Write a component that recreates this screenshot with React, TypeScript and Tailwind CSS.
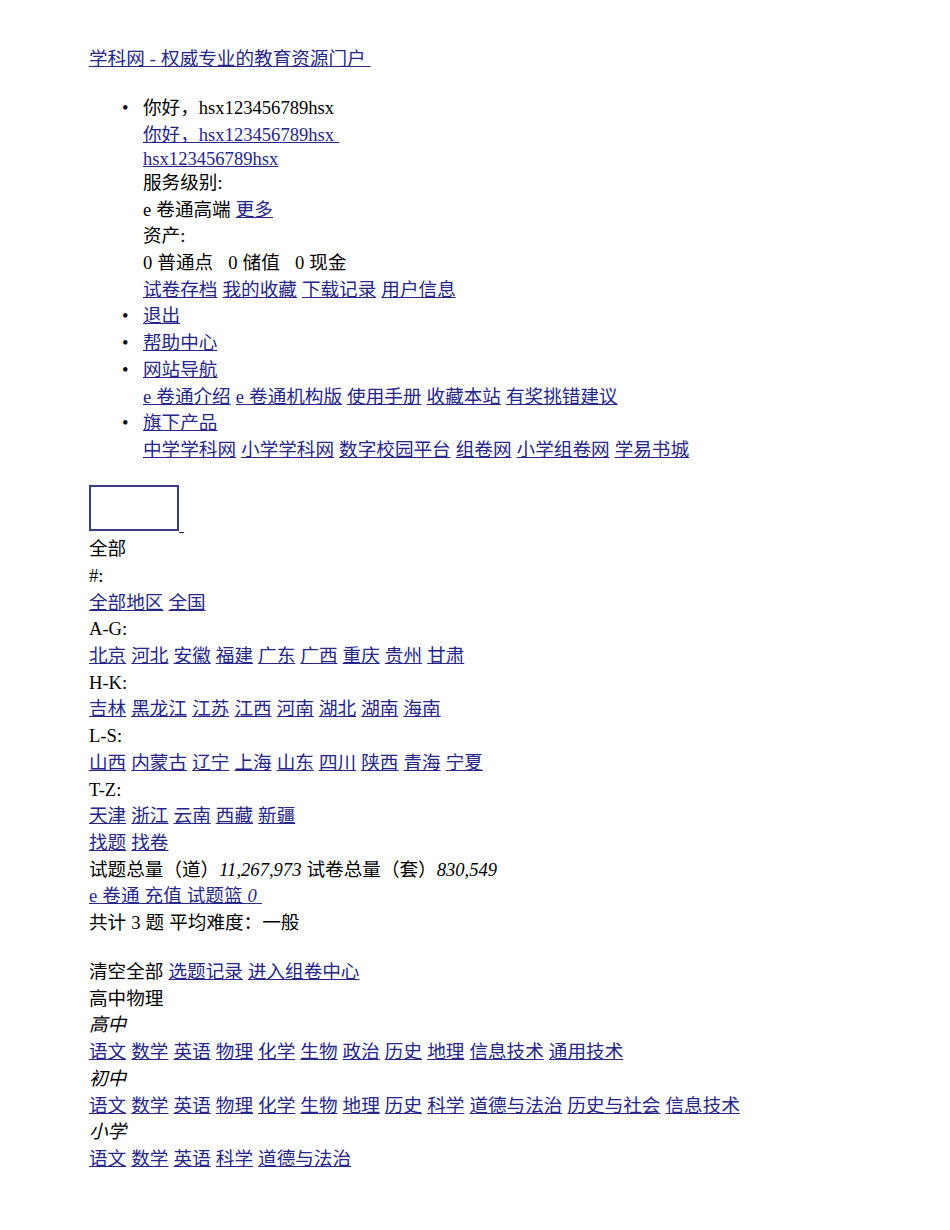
import React from "react";

const A = ({ children, className = "" }: { children: React.ReactNode; className?: string }) => (
  <a href="#" className={"text-[#26268a] underline " + className}>
    {children}
  </a>
);

const Links = ({ items }: { items: string[] }) => (
  <div>
    {items.map((t, i) => (
      <React.Fragment key={i}>
        {i > 0 ? " " : ""}
        <A>{t}</A>
      </React.Fragment>
    ))}
  </div>
);

const Li = ({ children }: { children: React.ReactNode }) => (
  <li className="flex">
    <span className="w-[24px] shrink-0 pl-[3px]">•</span>
    <div>{children}</div>
  </li>
);

export default function App() {
  return (
    <div
      className="bg-white text-black text-[18.6px] leading-[26.7px] [word-spacing:0.4px] pl-[89px] pt-[46px] pb-10 min-h-[1230px]"
      style={{ fontFamily: '"Liberation Serif", "Noto Sans CJK SC", serif' }}
    >
      <div>
        <A>学科网 - 权威专业的教育资源门户&nbsp;</A>
      </div>
      <ul className="pl-[30px] mt-[22.3px] mb-[21.6px]">
        <Li>
          <div>你好，hsx123456789hsx</div>
          <div>
            <A>你好，hsx123456789hsx&nbsp;</A>
          </div>
          <div className="leading-[21.5px]">
            <A>hsx123456789hsx</A>
          </div>
          <div>服务级别:</div>
          <div>
            e 卷通高端 <A>更多</A>
          </div>
          <div>资产:</div>
          <div>0 普通点&nbsp;&nbsp;&nbsp;0 储值&nbsp;&nbsp;&nbsp;0 现金</div>
          <Links items={["试卷存档", "我的收藏", "下载记录", "用户信息"]} />
        </Li>
        <Li>
          <A>退出</A>
        </Li>
        <Li>
          <A>帮助中心</A>
        </Li>
        <Li>
          <div>
            <A>网站导航</A>
          </div>
          <Links items={["e 卷通介绍", "e 卷通机构版", "使用手册", "收藏本站", "有奖挑错建议"]} />
        </Li>
        <Li>
          <div>
            <A>旗下产品</A>
          </div>
          <Links items={["中学学科网", "小学学科网", "数字校园平台", "组卷网", "小学组卷网", "学易书城"]} />
        </Li>
      </ul>
      <div className="leading-[22px]">
        <a href="#" className="text-[#26268a] underline">
          <span className="inline-block w-[90px] h-[46px] border-2 border-[#3c3c8c]"></span>
          &nbsp;
        </a>
      </div>
      <div>全部</div>
      <div>#:</div>
      <Links items={["全部地区", "全国"]} />
      <div>A-G:</div>
      <Links items={["北京", "河北", "安徽", "福建", "广东", "广西", "重庆", "贵州", "甘肃"]} />
      <div>H-K:</div>
      <Links items={["吉林", "黑龙江", "江苏", "江西", "河南", "湖北", "湖南", "海南"]} />
      <div>L-S:</div>
      <Links items={["山西", "内蒙古", "辽宁", "上海", "山东", "四川", "陕西", "青海", "宁夏"]} />
      <div>T-Z:</div>
      <Links items={["天津", "浙江", "云南", "西藏", "新疆"]} />
      <Links items={["找题", "找卷"]} />
      <div>
        试题总量（道）<i>11,267,973</i> 试卷总量（套）<i>830,549</i>
      </div>
      <div>
        <A>
          e 卷通 充值 试题篮 <i>0</i>&nbsp;
        </A>
      </div>
      <div>共计 3 题 平均难度：一般</div>
      <div className="mt-[22.3px]">
        清空全部 <A>选题记录</A> <A>进入组卷中心</A>
      </div>
      <div>高中物理</div>
      <div>
        <i>高中</i>
      </div>
      <Links items={["语文", "数学", "英语", "物理", "化学", "生物", "政治", "历史", "地理", "信息技术", "通用技术"]} />
      <div>
        <i>初中</i>
      </div>
      <Links items={["语文", "数学", "英语", "物理", "化学", "生物", "地理", "历史", "科学", "道德与法治", "历史与社会", "信息技术"]} />
      <div>
        <i>小学</i>
      </div>
      <Links items={["语文", "数学", "英语", "科学", "道德与法治"]} />
    </div>
  );
}
